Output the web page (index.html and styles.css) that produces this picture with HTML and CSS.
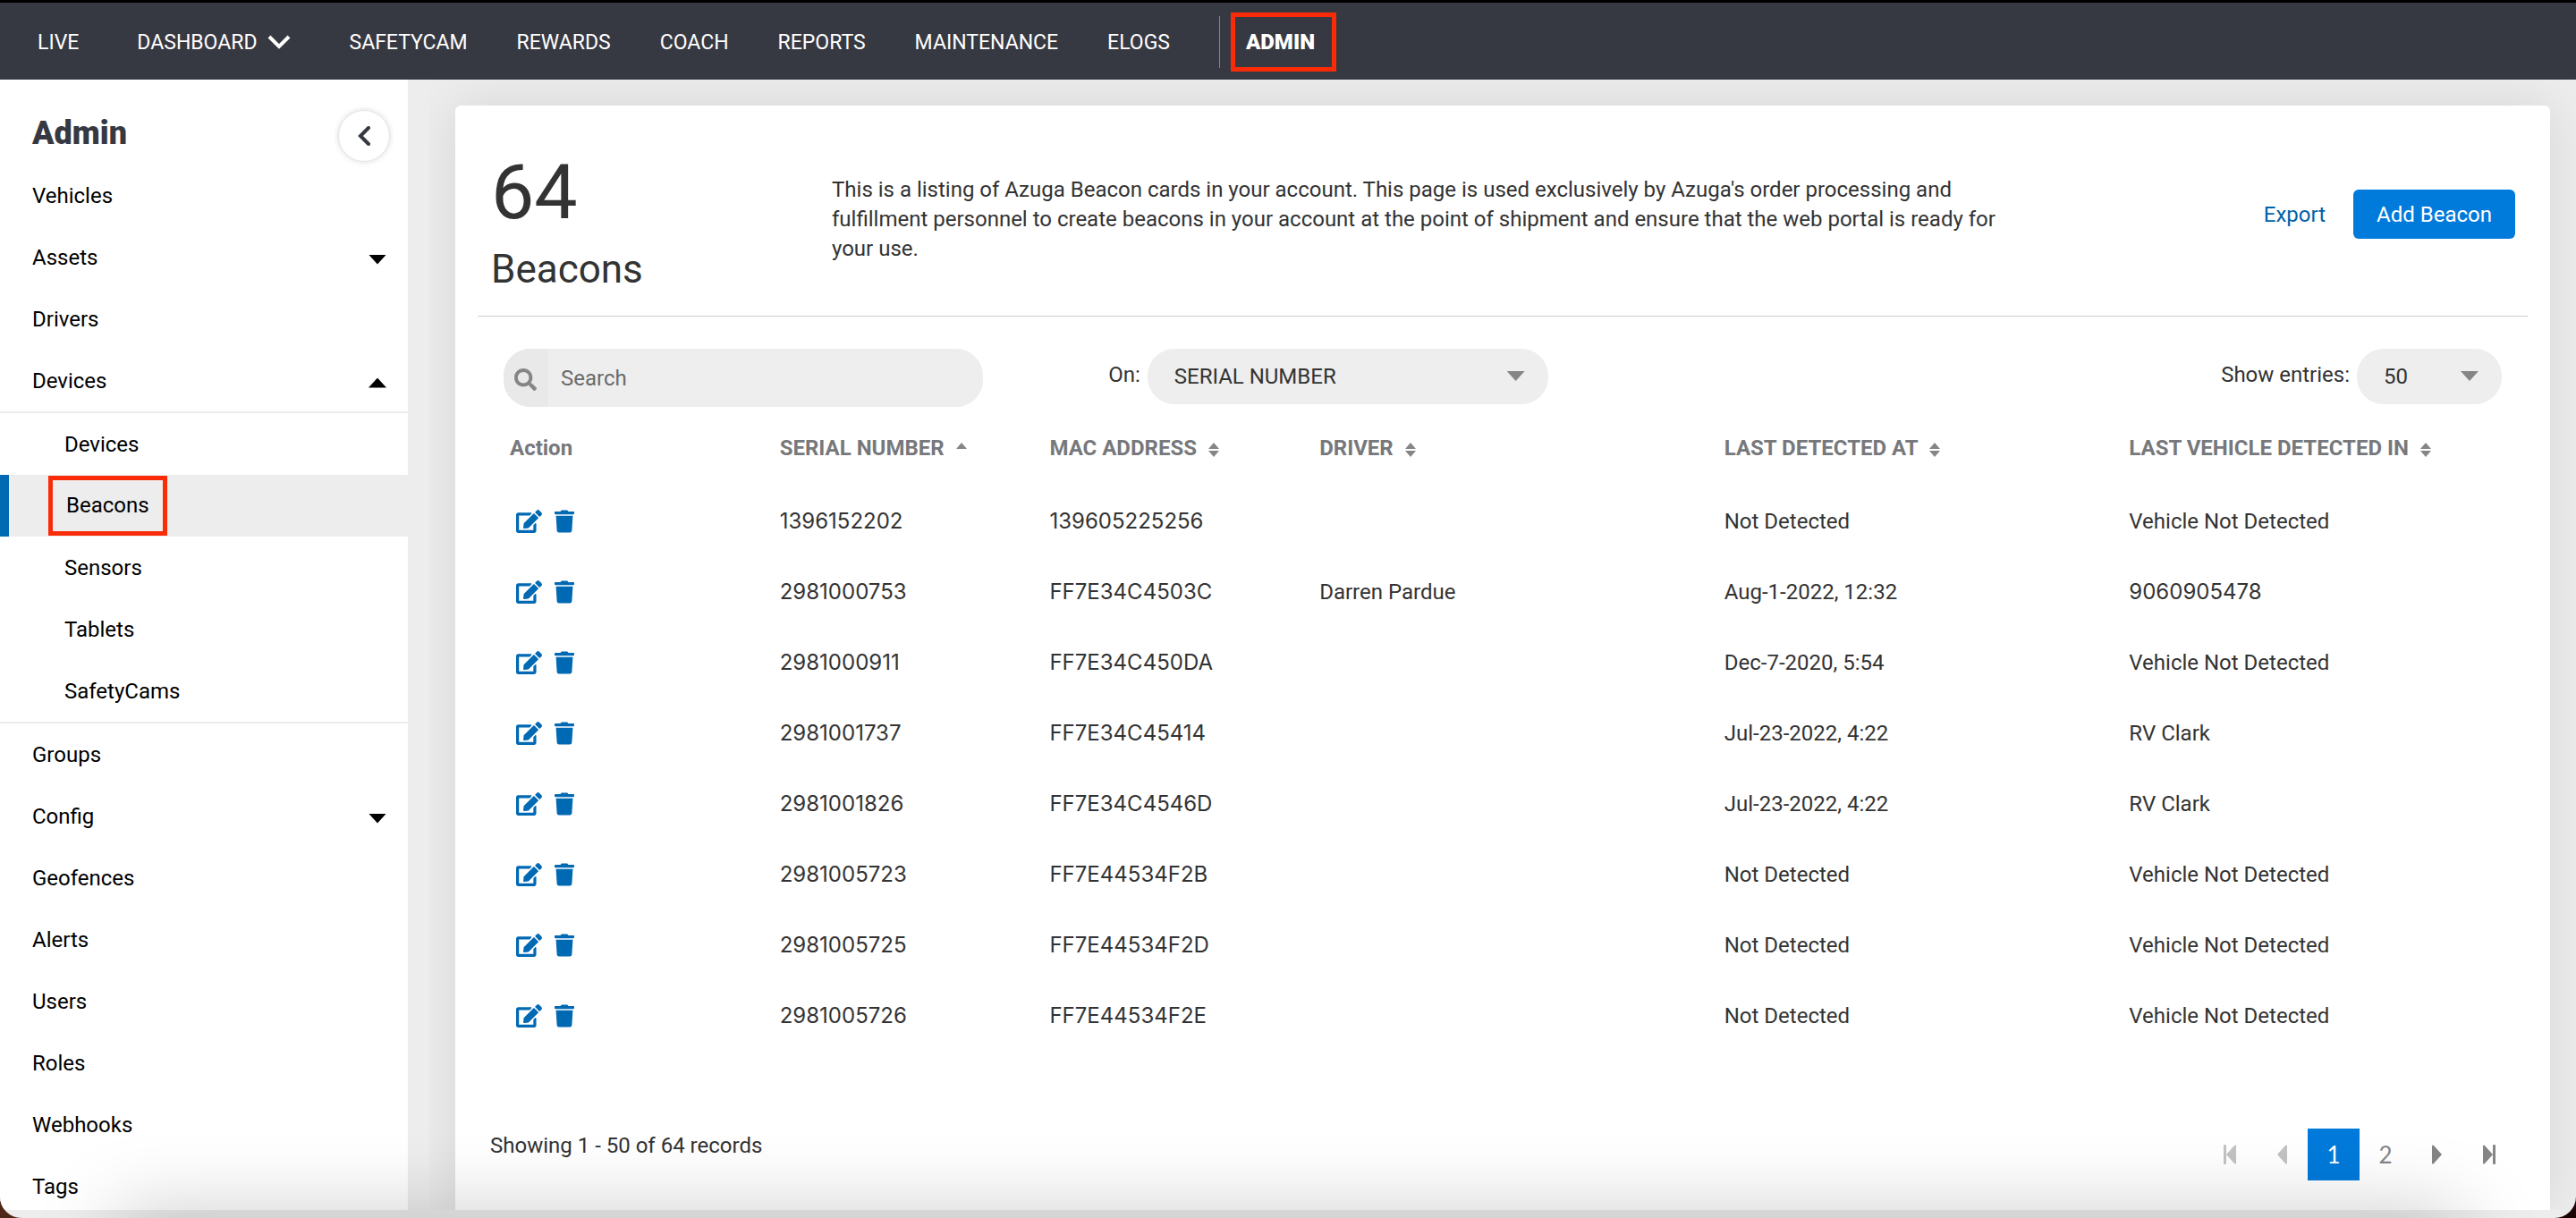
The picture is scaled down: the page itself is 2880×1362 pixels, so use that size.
FILE: index.html
```html
<!DOCTYPE html>
<html lang="en">
<head>
  <meta charset="UTF-8" />
  <meta name="viewport" content="width=device-width, initial-scale=1.0"/>
  <title>Beacons</title>
  <link rel="stylesheet" href="styles.css">
</head>
<body>
  <svg class="sprite" aria-hidden="true">
    <symbol id="edit" viewBox="0 0 576 512">
      <path d="M402.6 83.2l90.2 90.2c3.8 3.8 3.8 10 0 13.8L274.4 405.6l-92.8 10.3c-12.4 1.4-22.9-9.1-21.5-21.5l10.3-92.8L388.8 83.2c3.8-3.8 10-3.8 13.8 0zm162-22.9l-48.8-48.8c-15.2-15.2-39.9-15.2-55.2 0l-35.4 35.4c-3.8 3.8-3.8 10 0 13.8l90.2 90.2c3.8 3.8 10 3.8 13.8 0l35.4-35.4c15.2-15.3 15.2-40 0-55.2zM384 346.2V448H64V128h229.8c3.2 0 6.2-1.3 8.5-3.5l40-40c7.6-7.6 2.2-20.5-8.5-20.5H48C21.5 64 0 85.5 0 112v352c0 26.5 21.5 48 48 48h352c26.5 0 48-21.5 48-48V306.2c0-10.7-12.9-16-20.5-8.5l-40 40c-2.2 2.3-3.5 5.3-3.5 8.5z"/>
    </symbol>
    <symbol id="trash" viewBox="0 0 448 512">
      <path d="M432 32H312l-9.4-18.7A24 24 0 0 0 281.1 0H166.8a23.72 23.72 0 0 0-21.4 13.3L136 32H16A16 16 0 0 0 0 48v32a16 16 0 0 0 16 16h416a16 16 0 0 0 16-16V48a16 16 0 0 0-16-16zM53.2 467a48 48 0 0 0 47.9 45h245.8a48 48 0 0 0 47.9-45L416 128H32z"/>
    </symbol>
    <symbol id="search-icon" viewBox="0 0 512 512">
      <path d="M505 442.7L405.3 343c-4.5-4.5-10.6-7-17-7H372c27.6-35.3 44-79.7 44-128C416 93.1 322.9 0 208 0S0 93.1 0 208s93.1 208 208 208c48.3 0 92.7-16.4 128-44v16.3c0 6.4 2.5 12.5 7 17l99.7 99.7c9.4 9.4 24.6 9.4 33.9 0l28.3-28.3c9.4-9.4 9.4-24.6.1-34zM208 336c-70.7 0-128-57.2-128-128 0-70.7 57.2-128 128-128 70.7 0 128 57.2 128 128 0 70.7-57.2 128-128 128z"/>
    </symbol>
    <symbol id="sort" viewBox="0 0 14 16">
      <path d="M7 0L13 7H1zM1 9h12l-6 7z"/>
    </symbol>
    <symbol id="sort-up" viewBox="0 0 14 16">
      <path d="M7 0L13 7H1z"/>
    </symbol>
    <symbol id="first" viewBox="0 0 14 22">
      <path d="M0 1q0-1 1-1h1q1 0 1 1v20q0 1-1 1H1q-1 0-1-1zM14 1v20q-1 1-2 0L3 11l9-10q1-1 2 0z"/>
    </symbol>
    <symbol id="prev" viewBox="0 0 14 22">
      <path d="M13 1v20q-1 1-2 0L2 11l9-10q1-1 2 0z"/>
    </symbol>
  </svg>

  <div class="window">
    <nav class="topbar">
      <a href="#">LIVE</a>
      <a href="#" class="dropdown">DASHBOARD
        <svg width="26" height="16" viewBox="0 0 26 16"><path d="M2 2l11 11L24 2" fill="none" stroke="#fff" stroke-width="4"/></svg>
      </a>
      <a href="#">SAFETYCAM</a>
      <a href="#">REWARDS</a>
      <a href="#">COACH</a>
      <a href="#">REPORTS</a>
      <a href="#">MAINTENANCE</a>
      <a href="#">ELOGS</a>
      <span class="separator"></span>
      <a href="#" class="current highlight">ADMIN</a>
    </nav>

    <div class="layout">
      <aside class="sidebar">
        <div class="sidebar-header">
          <h2>Admin</h2>
          <button class="collapse" aria-label="Collapse menu">
            <svg width="14" height="22" viewBox="0 0 14 22"><path d="M12 2L3 11l9 9" fill="none" stroke="#373942" stroke-width="4" stroke-linecap="round"/></svg>
          </button>
        </div>
        <ul class="menu">
          <li><a href="#">Vehicles</a></li>
          <li><a href="#">Assets <span class="caret"></span></a></li>
          <li><a href="#">Drivers</a></li>
          <li><a href="#">Devices <span class="caret up"></span></a>
            <ul class="submenu">
              <li><a href="#">Devices</a></li>
              <li><a href="#" class="active"><span class="highlight">Beacons</span></a></li>
              <li><a href="#">Sensors</a></li>
              <li><a href="#">Tablets</a></li>
              <li><a href="#">SafetyCams</a></li>
            </ul>
          </li>
          <li><a href="#">Groups</a></li>
          <li><a href="#">Config <span class="caret"></span></a></li>
          <li><a href="#">Geofences</a></li>
          <li><a href="#">Alerts</a></li>
          <li><a href="#">Users</a></li>
          <li><a href="#">Roles</a></li>
          <li><a href="#">Webhooks</a></li>
          <li><a href="#">Tags</a></li>
        </ul>
      </aside>

      <main class="content">
        <section class="card">
          <header class="card-header">
            <h1><span class="count">64</span> Beacons</h1>
            <p class="description">This is a listing of Azuga Beacon cards in your account. This page is used exclusively by Azuga's order processing and fulfillment personnel to create beacons in your account at the point of shipment and ensure that the web portal is ready for your use.</p>
            <div class="actions">
              <a href="#">Export</a>
              <button class="add-button">Add Beacon</button>
            </div>
          </header>

          <form class="filters">
            <div class="search">
              <label for="search"><svg width="25" height="25" role="img" aria-label="Search"><use href="#search-icon"/></svg></label>
              <input type="text" id="search" placeholder="Search">
            </div>
            <div class="filter filter-on">
              <label for="on">On:</label>
              <span class="select">
                <select id="on">
                  <option>SERIAL NUMBER</option>
                </select>
              </span>
            </div>
            <div class="filter filter-entries">
              <label for="entries">Show entries:</label>
              <span class="select">
                <select id="entries">
                  <option>50</option>
                </select>
              </span>
            </div>
          </form>

          <table class="beacons">
            <colgroup>
              <col class="col-small"><col class="col-small"><col class="col-small">
              <col class="col-large"><col class="col-large"><col class="col-large">
            </colgroup>
            <thead>
              <tr>
                <th>Action</th>
                <th>SERIAL NUMBER <svg><use href="#sort-up"/></svg></th>
                <th>MAC ADDRESS <svg><use href="#sort"/></svg></th>
                <th>DRIVER <svg><use href="#sort"/></svg></th>
                <th>LAST DETECTED AT <svg><use href="#sort"/></svg></th>
                <th>LAST VEHICLE DETECTED IN <svg><use href="#sort"/></svg></th>
              </tr>
            </thead>
            <tbody>
              <tr>
                <td><div class="row-actions"><button aria-label="Edit"><svg class="edit"><use href="#edit"/></svg></button><button aria-label="Delete"><svg class="trash"><use href="#trash"/></svg></button></div></td>
                <td class="code">1396152202</td>
                <td class="code">139605225256</td>
                <td></td>
                <td>Not Detected</td>
                <td>Vehicle Not Detected</td>
              </tr>
              <tr>
                <td><div class="row-actions"><button aria-label="Edit"><svg class="edit"><use href="#edit"/></svg></button><button aria-label="Delete"><svg class="trash"><use href="#trash"/></svg></button></div></td>
                <td class="code">2981000753</td>
                <td class="code">FF7E34C4503C</td>
                <td>Darren Pardue</td>
                <td>Aug-1-2022, 12:32</td>
                <td class="code">9060905478</td>
              </tr>
              <tr>
                <td><div class="row-actions"><button aria-label="Edit"><svg class="edit"><use href="#edit"/></svg></button><button aria-label="Delete"><svg class="trash"><use href="#trash"/></svg></button></div></td>
                <td class="code">2981000911</td>
                <td class="code">FF7E34C450DA</td>
                <td></td>
                <td>Dec-7-2020, 5:54</td>
                <td>Vehicle Not Detected</td>
              </tr>
              <tr>
                <td><div class="row-actions"><button aria-label="Edit"><svg class="edit"><use href="#edit"/></svg></button><button aria-label="Delete"><svg class="trash"><use href="#trash"/></svg></button></div></td>
                <td class="code">2981001737</td>
                <td class="code">FF7E34C45414</td>
                <td></td>
                <td>Jul-23-2022, 4:22</td>
                <td>RV Clark</td>
              </tr>
              <tr>
                <td><div class="row-actions"><button aria-label="Edit"><svg class="edit"><use href="#edit"/></svg></button><button aria-label="Delete"><svg class="trash"><use href="#trash"/></svg></button></div></td>
                <td class="code">2981001826</td>
                <td class="code">FF7E34C4546D</td>
                <td></td>
                <td>Jul-23-2022, 4:22</td>
                <td>RV Clark</td>
              </tr>
              <tr>
                <td><div class="row-actions"><button aria-label="Edit"><svg class="edit"><use href="#edit"/></svg></button><button aria-label="Delete"><svg class="trash"><use href="#trash"/></svg></button></div></td>
                <td class="code">2981005723</td>
                <td class="code">FF7E44534F2B</td>
                <td></td>
                <td>Not Detected</td>
                <td>Vehicle Not Detected</td>
              </tr>
              <tr>
                <td><div class="row-actions"><button aria-label="Edit"><svg class="edit"><use href="#edit"/></svg></button><button aria-label="Delete"><svg class="trash"><use href="#trash"/></svg></button></div></td>
                <td class="code">2981005725</td>
                <td class="code">FF7E44534F2D</td>
                <td></td>
                <td>Not Detected</td>
                <td>Vehicle Not Detected</td>
              </tr>
              <tr>
                <td><div class="row-actions"><button aria-label="Edit"><svg class="edit"><use href="#edit"/></svg></button><button aria-label="Delete"><svg class="trash"><use href="#trash"/></svg></button></div></td>
                <td class="code">2981005726</td>
                <td class="code">FF7E44534F2E</td>
                <td></td>
                <td>Not Detected</td>
                <td>Vehicle Not Detected</td>
              </tr>
            </tbody>
          </table>

          <footer class="card-footer">
            <p>Showing 1 - 50 of 64 records</p>
            <div class="pagination">
              <button disabled aria-label="First page"><svg><use href="#first"/></svg></button>
              <button disabled aria-label="Previous page"><svg><use href="#prev"/></svg></button>
              <button class="page-active">1</button>
              <button>2</button>
              <button class="flip" aria-label="Next page"><svg><use href="#prev"/></svg></button>
              <button class="flip" aria-label="Last page"><svg><use href="#first"/></svg></button>
            </div>
          </footer>
        </section>
      </main>
    </div>
  </div>
</body>
</html>
```
FILE: styles.css
```css
* {
  box-sizing: border-box;
}

html {
  background: linear-gradient(90deg, #4e2717, #1c0405);
}

body {
  margin: 0;
  font-family: Roboto, 'Liberation Sans', sans-serif;
  font-size: 24px;
  color: #333;
}

a {
  color: inherit;
  text-decoration: none;
}

button,
input,
select {
  font: inherit;
  color: inherit;
  border: none;
  padding: 0;
  background: none;
}

button {
  cursor: pointer;
}

ul {
  list-style: none;
  margin: 0;
  padding: 0;
}

.sprite {
  display: none;
}

.window {
  position: relative;
  display: flex;
  flex-direction: column;
  height: 100vh;
  padding-bottom: 9px;
  border-top: 3px solid #000;
  border-radius: 0 0 24px 24px;
  background: #ededed;
  overflow: hidden;
}

/* soft shadow along the bottom edge */
.window::after {
  content: "";
  position: absolute;
  left: 130px;
  right: 130px;
  top: 100%;
  height: 60px;
  box-shadow: 0 0 90px rgba(0,0,0,0.26);
  pointer-events: none;
}

.highlight {
  border: 5px solid #fa2c08;
}

/* top bar */
.topbar {
  display: flex;
  align-items: center;
  gap: 55px;
  flex: none;
  height: 86px;
  padding: 2px 42px 0;
  background: #373942;
  color: #fff;
  font-size: 23px;
}

.dropdown {
  display: flex;
  align-items: center;
  gap: 12px;
  padding: 0 10px;
}

.separator {
  width: 1px;
  height: 58px;
  background: #85868c;
}

.current {
  margin-left: -43px;
  padding: 0 19px 0 12px;
  line-height: 56px;
  font-size: 24px;
  font-weight: 900;
}

.layout {
  display: flex;
  flex: 1;
  min-height: 0;
}

/* sidebar */
.sidebar {
  flex: none;
  width: 456px;
  margin-right: 24px;
  background: #fff;
  color: #000;
  overflow: hidden;
}

.sidebar-header {
  display: flex;
  align-items: flex-start;
  justify-content: space-between;
  height: 95px;
  padding: 34px 20px 0 36px;
}

.sidebar-header h2 {
  margin: 0;
  font-size: 36px;
  font-weight: 900;
  line-height: 52px;
  color: #373942;
}

.collapse {
  display: flex;
  align-items: center;
  justify-content: center;
  width: 58px;
  height: 58px;
  border: 1px solid #e4e4e4;
  border-radius: 50%;
  box-shadow: 0 0 6px rgba(0,0,0,0.15);
}

.menu a {
  display: flex;
  align-items: center;
  justify-content: space-between;
  height: 69px;
  padding: 0 24px 0 36px;
}

.submenu {
  border-top: 2px solid #ededed;
  border-bottom: 2px solid #ededed;
}

.submenu a {
  padding-left: 72px;
}

.submenu .active {
  padding-left: 44px;
  border-left: 10px solid #0069b4;
  background: #ededed;
}

.submenu .highlight {
  padding: 0 15px;
  line-height: 57px;
}

.caret {
  width: 20px;
  height: 11px;
  margin-top: 5px;
  background: #000;
  clip-path: polygon(0 0, 100% 0, 50% 100%);
}

.caret.up {
  clip-path: polygon(50% 0, 100% 100%, 0 100%);
}

/* content */
.content {
  display: flex;
  flex: 1;
  min-width: 0;
  padding: 29px 29px 0;
  overflow: hidden;
}

.card {
  display: flex;
  flex-direction: column;
  flex: 1;
  min-width: 0;
  padding: 0 25px 33px;
  background: #fff;
  border-radius: 6px 6px 0 0;
  box-shadow: 0 0 60px rgba(0,0,0,0.1);
}

.card-header {
  display: flex;
  align-items: flex-start;
  padding: 47px 14px 16px 15px;
  border-bottom: 1px solid #ccc;
}

.card-header h1 {
  flex: none;
  width: 381px;
  margin: 0;
  font-size: 44px;
  font-weight: 400;
  line-height: 72px;
}

.count {
  display: block;
  font-size: 86px;
  line-height: 100px;
}

.description {
  max-width: 1320px;
  margin: 31px 0 0;
  line-height: 33px;
}

.actions {
  display: flex;
  align-items: center;
  gap: 31px;
  margin: 47px 0 0 auto;
}

.actions a {
  color: #0063a8;
}

.add-button {
  height: 55px;
  padding: 0 26px;
  background: #007adb;
  color: #fff;
  border-radius: 6px;
}

/* filters */
.filters {
  display: flex;
  align-items: flex-start;
  padding: 36px 29px 0;
}

.search {
  display: flex;
  width: 24%;
  height: 65px;
  border-radius: 30px;
  background: #eee;
  overflow: hidden;
}

.search label {
  display: flex;
  align-items: center;
  width: 50px;
  padding: 4px 0 0 12px;
  background: #e9e9e9;
  fill: #858585;
}

.search input {
  flex: 1;
  min-width: 0;
  padding: 0 14px;
}

.search input::placeholder {
  color: #6a6a6a;
}

.filter {
  display: flex;
  gap: 8px;
}

.filter label {
  line-height: 58px;
}

.filter-on {
  width: 22%;
  margin-left: 140px;
}

.filter-on .select {
  flex: 1;
}

.filter-entries {
  margin-left: auto;
}

.filter-entries .select {
  width: 162px;
}

.select {
  position: relative;
}

.select select {
  width: 100%;
  height: 62px;
  padding: 0 30px;
  appearance: none;
  border-radius: 30px;
  background: #eee;
}

.select::after {
  content: "";
  position: absolute;
  right: 26px;
  top: 25px;
  width: 20px;
  height: 11px;
  background: #858585;
  clip-path: polygon(0 0, 100% 0, 50% 100%);
  pointer-events: none;
}

/* table */
.beacons {
  table-layout: fixed;
  width: 100%;
  padding-left: 29px;
  border-spacing: 0;
}

.col-small {
  width: 14%;
}

.col-large {
  width: 21%;
}

.beacons th,
.beacons td {
  height: 79px;
  padding: 0 7px;
  text-align: left;
  white-space: nowrap;
}

.beacons th {
  height: 88px;
  padding-top: 3px;
  color: #77787c;
}

.beacons th svg {
  width: 14px;
  height: 16px;
  margin-left: 6px;
  vertical-align: -2px;
  fill: #858585;
}

.beacons .code {
  font-family: Inter, sans-serif;
}

.row-actions {
  display: flex;
  gap: 14px;
  padding-left: 7px;
  fill: #0069b4;
}

.row-actions button,
.row-actions svg {
  display: block;
}

.edit {
  width: 29px;
  height: 26px;
}

.trash {
  width: 22px;
  height: 26px;
}

/* footer */
.card-footer {
  display: flex;
  align-items: flex-start;
  justify-content: space-between;
  margin-top: auto;
  padding: 0 14px;
}

.card-footer p {
  margin: 0;
  line-height: 38px;
}

.pagination {
  display: flex;
}

.pagination button {
  display: flex;
  align-items: center;
  justify-content: center;
  width: 58px;
  height: 58px;
  font-family: Lato, sans-serif;
  font-size: 26px;
  color: #858585;
  fill: #858585;
}

.pagination svg {
  width: 14px;
  height: 22px;
}

.pagination button:disabled {
  fill: #c3c3c3;
}

.pagination .flip svg {
  transform: rotate(180deg);
}

.pagination .page-active {
  background: #007adb;
  color: #fff;
}
```
